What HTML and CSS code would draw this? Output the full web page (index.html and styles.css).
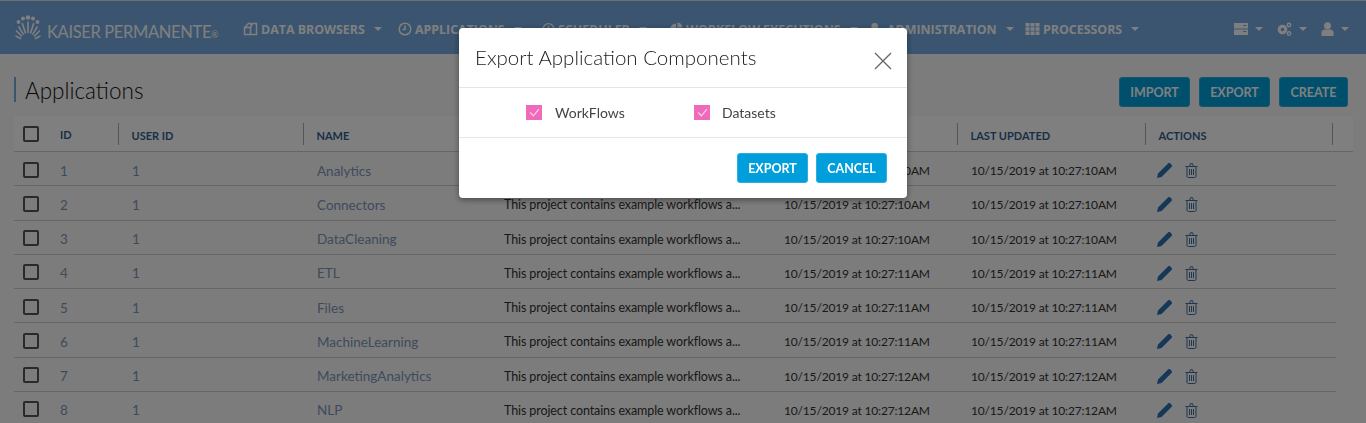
FILE: index.html
```html
<!doctype html>
<html lang="en">
<head>
<meta charset="utf-8">
<title>Applications</title>
<link rel="stylesheet" href="styles.css">
</head>
<body>
<svg class="sprite">
  <symbol id="ic_edit" viewBox="0 0 15 15"><path d="M0 15l1-4.500L10.500 1l3.500 3.500L4.500 14zM11.300.3c.6-.5 1.300-.4 1.800 0l1.600 1.600c.5.500.5 1.200 0 1.800l-.8.800-3.400-3.400z"/></symbol>
  <symbol id="ic_trash" viewBox="0 0 13 15"><path d="M.5 3.500h12M2 3.500V13c0 1 .5 1.500 1.500 1.500h6c1 0 1.500-.5 1.500-1.500V3.500M4.500 3.500l1-2.800h2l1 2.800M4.500 6v6M6.500 6v6M8.500 6v6"/></symbol>
</svg>

<header class="topbar">
  <div class="logo">
    <svg class="logo_mark" width="26" height="25" viewBox="0 0 26 25">
      <circle cx="3.500" cy="7" r="1.900"/><circle cx="8" cy="3.500" r="2"/><circle cx="13" cy="2.500" r="2.300"/><circle cx="18" cy="3.500" r="2"/><circle cx="22.500" cy="7" r="1.900"/>
      <path class="fan" d="M13 18V6.500M15.400 18.400 18.800 8M17.500 19.600 22.500 11.500M19.100 21.500 25 15.500M19.900 23.800 25.500 21M10.600 18.400 7.200 8M8.500 19.600 3.500 11.500M6.900 21.500 1 15.500M6.100 23.800.5 21"/>
    </svg>
    <span class="logo_text">KAISER PERMANENTE<small>&reg;</small></span>
  </div>
  <nav class="nav">
    <a class="nav_item nav_data">
      <svg width="15" height="14" viewBox="0 0 14 14" class="line"><path d="M1 5.500 5 1.500h2.500v4H1v7h6v-7M7.500 3.500 9.500 1.500H13v11H7"/></svg>
      DATA BROWSERS <i class="caret"></i></a>
    <a class="nav_item nav_apps">
      <svg width="14" height="14" viewBox="0 0 14 14" class="line"><circle cx="7" cy="7" r="5.800"/><path d="M7 3.500V7.500H4.500"/></svg>
      APPLICATIONS <i class="caret"></i></a>
    <a class="nav_item nav_sched">
      <svg width="13" height="14" viewBox="0 0 14 14" class="line"><circle cx="7" cy="7" r="5.800"/><path d="M7 3.500V7.500H10"/></svg>
      SCHEDULER <i class="caret"></i></a>
    <a class="nav_item nav_flow">
      <svg width="13" height="14" viewBox="0 0 14 14"><path d="M6.500 1a6.500 6.500 0 1 0 6.500 6.500H6.500z"/><path d="M8 0v5.500h5.500A6 6 0 0 0 8 0z"/></svg>
      WORKFLOW EXECUTIONS <i class="caret"></i></a>
    <a class="nav_item nav_admin">
      <svg width="14" height="14" viewBox="0 0 15 14"><circle cx="5" cy="4" r="3.500"/><path d="M0 13c0-4 2-5 5-5s5 1 5 5z"/><circle cx="11" cy="10" r="3" class="cut"/></svg>
      ADMINISTRATION <i class="caret"></i></a>
    <a class="nav_item">
      <svg width="15" height="12" viewBox="0 0 14 12"><path d="M0 0h4v3.400H0zM5 0h4v3.400H5zM10 0h4v3.400h-4zM0 4.300h4v3.400H0zM5 4.300h4v3.400H5zM10 4.300h4v3.400h-4zM0 8.600h4V12H0zM5 8.600h4V12H5zM10 8.600h4V12h-4z"/></svg>
      PROCESSORS <i class="caret"></i></a>
  </nav>
  <div class="nav_right">
    <a class="nav_icon">
      <svg width="14" height="12" viewBox="0 0 14 12"><path d="M0 0h14v5.500H0zM0 6.500h14V12H0z"/><path class="cut" d="M9 8.500h3.500M9 2.500h3.500"/></svg><i class="caret"></i></a>
    <a class="nav_icon">
      <svg width="15" height="14" viewBox="0 0 15 14"><circle cx="5.500" cy="7.500" r="3.300" class="gear"/><circle cx="12" cy="3" r="1.700" class="gear_small"/><circle cx="12" cy="11.500" r="1.700" class="gear_small"/></svg><i class="caret"></i></a>
    <a class="nav_icon">
      <svg width="13" height="14" viewBox="0 0 13 14"><circle cx="6.500" cy="3.700" r="3.500"/><path d="M.5 14v-3.500C.5 9 2 7.500 4 7.500h5c2 0 3.500 1.500 3.500 3V14z"/></svg><i class="caret"></i></a>
  </div>
</header>

<main class="content">
  <div class="title_bar">
    <h1 class="page_title">Applications</h1>
    <div class="title_btns">
      <button class="btn btn_w71">IMPORT</button>
      <button class="btn btn_w71">EXPORT</button>
      <button class="btn btn_w69">CREATE</button>
    </div>
  </div>

  <div class="grid_head">
    <div class="cell_check"><span class="check"></span></div>
    <div class="col_id">ID</div>
    <div class="col">USER ID</div>
    <div class="col">NAME</div>
    <div class="col">DESCRIPTION</div>
    <div class="col">CREATED</div>
    <div class="col">LAST UPDATED</div>
    <div class="col col_end">ACTIONS</div>
  </div>

  <div class="grid_row"><div class="cell_check"><span class="check"></span></div><div class="cell_id link">1</div><div class="cell link">1</div><div class="cell link">Analytics</div><div class="cell desc">This project contains example workflows a...</div><div class="cell date">10/15/2019 at 10:27:10AM</div><div class="cell date">10/15/2019 at 10:27:10AM</div><div class="actions"><svg class="ic_edit" width="15" height="15"><use href="#ic_edit"/></svg><svg class="ic_trash" width="13" height="15"><use href="#ic_trash"/></svg></div></div>
  <div class="grid_row"><div class="cell_check"><span class="check"></span></div><div class="cell_id link">2</div><div class="cell link">1</div><div class="cell link">Connectors</div><div class="cell desc">This project contains example workflows a...</div><div class="cell date">10/15/2019 at 10:27:10AM</div><div class="cell date">10/15/2019 at 10:27:10AM</div><div class="actions"><svg class="ic_edit" width="15" height="15"><use href="#ic_edit"/></svg><svg class="ic_trash" width="13" height="15"><use href="#ic_trash"/></svg></div></div>
  <div class="grid_row"><div class="cell_check"><span class="check"></span></div><div class="cell_id link">3</div><div class="cell link">1</div><div class="cell link">DataCleaning</div><div class="cell desc">This project contains example workflows a...</div><div class="cell date">10/15/2019 at 10:27:10AM</div><div class="cell date">10/15/2019 at 10:27:10AM</div><div class="actions"><svg class="ic_edit" width="15" height="15"><use href="#ic_edit"/></svg><svg class="ic_trash" width="13" height="15"><use href="#ic_trash"/></svg></div></div>
  <div class="grid_row"><div class="cell_check"><span class="check"></span></div><div class="cell_id link">4</div><div class="cell link">1</div><div class="cell link">ETL</div><div class="cell desc">This project contains example workflows a...</div><div class="cell date">10/15/2019 at 10:27:11AM</div><div class="cell date">10/15/2019 at 10:27:11AM</div><div class="actions"><svg class="ic_edit" width="15" height="15"><use href="#ic_edit"/></svg><svg class="ic_trash" width="13" height="15"><use href="#ic_trash"/></svg></div></div>
  <div class="grid_row"><div class="cell_check"><span class="check"></span></div><div class="cell_id link">5</div><div class="cell link">1</div><div class="cell link">Files</div><div class="cell desc">This project contains example workflows a...</div><div class="cell date">10/15/2019 at 10:27:11AM</div><div class="cell date">10/15/2019 at 10:27:11AM</div><div class="actions"><svg class="ic_edit" width="15" height="15"><use href="#ic_edit"/></svg><svg class="ic_trash" width="13" height="15"><use href="#ic_trash"/></svg></div></div>
  <div class="grid_row"><div class="cell_check"><span class="check"></span></div><div class="cell_id link">6</div><div class="cell link">1</div><div class="cell link">MachineLearning</div><div class="cell desc">This project contains example workflows a...</div><div class="cell date">10/15/2019 at 10:27:11AM</div><div class="cell date">10/15/2019 at 10:27:11AM</div><div class="actions"><svg class="ic_edit" width="15" height="15"><use href="#ic_edit"/></svg><svg class="ic_trash" width="13" height="15"><use href="#ic_trash"/></svg></div></div>
  <div class="grid_row"><div class="cell_check"><span class="check"></span></div><div class="cell_id link">7</div><div class="cell link">1</div><div class="cell link">MarketingAnalytics</div><div class="cell desc">This project contains example workflows a...</div><div class="cell date">10/15/2019 at 10:27:12AM</div><div class="cell date">10/15/2019 at 10:27:12AM</div><div class="actions"><svg class="ic_edit" width="15" height="15"><use href="#ic_edit"/></svg><svg class="ic_trash" width="13" height="15"><use href="#ic_trash"/></svg></div></div>
  <div class="grid_row"><div class="cell_check"><span class="check"></span></div><div class="cell_id link">8</div><div class="cell link">1</div><div class="cell link">NLP</div><div class="cell desc">This project contains example workflows a...</div><div class="cell date">10/15/2019 at 10:27:12AM</div><div class="cell date">10/15/2019 at 10:27:12AM</div><div class="actions"><svg class="ic_edit" width="15" height="15"><use href="#ic_edit"/></svg><svg class="ic_trash" width="13" height="15"><use href="#ic_trash"/></svg></div></div>
</main>

<div class="overlay">
  <div class="modal">
    <div class="modal_head">
      <h2 class="modal_title">Export Application Components</h2>
      <svg class="modal_close" width="18" height="18" viewBox="0 0 18 18"><path d="M1 1l16 16M17 1L1 17"/></svg>
    </div>
    <div class="modal_body">
      <label class="pick pick_first"><span class="pink_check"><svg width="11" height="9" viewBox="0 0 10 8"><path d="M1 4l3 3 5-6"/></svg></span>WorkFlows</label>
      <label class="pick"><span class="pink_check"><svg width="11" height="9" viewBox="0 0 10 8"><path d="M1 4l3 3 5-6"/></svg></span>Datasets</label>
    </div>
    <div class="modal_foot">
      <button class="btn btn_w71">EXPORT</button>
      <button class="btn btn_w71">CANCEL</button>
    </div>
  </div>
</div>
</body>
</html>
```
FILE: styles.css
```css
* {
  margin: 0;
  padding: 0;
  box-sizing: border-box;
}
html, body {
  height: 423px;
  overflow: hidden;
}
body {
  background-color: #f8f8f8;
  font-family: "Lato", "Liberation Sans", sans-serif;
  font-size: 13.5px;
  color: #333;
}
.sprite {
  display: none;
}

/* top bar */
.topbar {
  height: 54px;
  border-top: 1px solid #ddd;
  background-color: #76aae0;
  display: flex;
  align-items: center;
  color: #fff;
}
.topbar svg {
  fill: #fff;
  flex: none;
}
.topbar svg.line {
  fill: none;
  stroke: #fff;
  stroke-width: 1.5;
}
.topbar svg .cut {
  stroke: #76aae0;
  stroke-width: 1;
}
.topbar svg .gear {
  fill: none;
  stroke: #fff;
  stroke-width: 3;
}
.topbar svg .gear_small {
  fill: none;
  stroke: #fff;
  stroke-width: 1.5;
}
.topbar svg .fan {
  fill: none;
  stroke: #fff;
  stroke-width: 1.6;
}
.logo {
  width: 243px;
  padding-left: 15px;
  display: flex;
  align-items: center;
  gap: 6px;
}
.logo_text {
  font-family: "Lato", sans-serif;
  font-size: 16.5px;
  letter-spacing: -.35px;
  margin-top: 8px;
  white-space: nowrap;
}
.logo_text small {
  font-size: 9px;
}
.nav {
  display: flex;
  flex: 1;
  padding-top: 3px;
}
.nav_item {
  display: flex;
  align-items: center;
  gap: 3px;
  font-family: "Open Sans", sans-serif;
  font-size: 12.4px;
  font-weight: 700;
  white-space: nowrap;
}
.nav_data { width: 155px; }
.nav_apps { width: 144px; }
.nav_sched { width: 128px; }
.nav_flow { width: 200px; }
.nav_admin { width: 155px; }
.caret {
  display: inline-block;
  width: 0;
  height: 0;
  border-left: 4px solid transparent;
  border-right: 4px solid transparent;
  border-top: 4px solid #fff;
  margin-left: 6px;
}
.nav_right {
  display: flex;
  padding: 3px 17px 0 0;
}
.nav_icon {
  display: flex;
  align-items: center;
  margin-left: 14px;
}
.nav_icon .caret {
  margin-left: 7px;
}

/* page */
.content {
  padding-top: 23px;
}
.title_bar {
  display: flex;
  justify-content: space-between;
  align-items: flex-start;
  margin: 0 18px 0 14px;
  height: 39px;
}
.page_title {
  border-left: 2px solid #76aae0;
  height: 25px;
  line-height: 27px;
  padding-left: 9px;
  font-size: 22.5px;
  font-weight: 300;
  color: #111;
}
.title_btns {
  display: flex;
  gap: 9px;
}
.btn {
  height: 30px;
  border: 1px solid #2badde;
  border-radius: 3px;
  background-color: #009fdb;
  color: #fff;
  font-family: "Lato", sans-serif;
  font-size: 12.5px;
  font-weight: 700;
}
.btn_w71 { width: 71px; }
.btn_w69 { width: 69px; }

/* table */
.grid_head, .grid_row {
  display: grid;
  grid-template-columns: 32px 72px 185px 187px 280px 187px 188px 189px;
  margin-left: 14px;
  align-items: center;
}
.grid_head {
  width: 1339px;
  height: 36px;
  background-color: #fff;
  border-bottom: 1px solid #ccc;
  font-size: 11px;
  font-weight: 700;
  color: #2f5f90;
}
.grid_row {
  height: 34.25px;
  width: 1322px;
  border-bottom: 1px solid #ccc;
}
.cell_check {
  padding-left: 9px;
  display: flex;
}
.grid_row .cell_check {
  padding-top: 2px;
}
.check {
  width: 16px;
  height: 16px;
  border: 2px solid #555;
  border-radius: 2px;
}
.col_id, .cell_id {
  padding-left: 14px;
}
.col_id {
  padding-top: 2px;
}
.cell_id {
  padding-top: 4px;
}
.col {
  padding-left: 12.5px;
  border-left: 1px solid #aaa;
  height: 22px;
  line-height: 25px;
}
.col_end {
  border-right: 1px solid #aaa;
  margin-right: 1px;
}
.cell {
  padding: 4px 0 0 14px;
  white-space: nowrap;
}
.desc {
  font-size: 12.5px;
  letter-spacing: -.1px;
}
.date {
  font-size: 12px;
  letter-spacing: -.17px;
}
.link {
  color: #7d97b8;
}
.actions {
  display: flex;
  align-items: center;
  gap: 13px;
  padding: 4px 0 0 12px;
}
.ic_edit {
  fill: #2a6fb0;
}
.ic_trash {
  fill: none;
  stroke: #3f70a0;
  stroke-width: 1;
}

/* dialog */
.overlay {
  position: fixed;
  left: 0;
  top: 0;
  right: 0;
  bottom: 0;
  background-color: rgba(0, 0, 0, .5);
}
.modal {
  width: 448px;
  height: 170px;
  margin: 28px auto 0;
  background-color: #fff;
  border-radius: 4px;
  box-shadow: 0 2px 6px rgba(0, 0, 0, .4);
}
.modal_head {
  height: 60px;
  padding: 0 15px 2px 16px;
  border-bottom: 1px solid #e5e5e5;
  display: flex;
  align-items: center;
  justify-content: space-between;
}
.modal_title {
  font-size: 20.5px;
  font-weight: 300;
  color: #222;
}
.modal_close {
  margin-top: 8px;
  stroke: #666;
  stroke-width: 1.300;
}
.modal_body {
  height: 50px;
  border-bottom: 1px solid #e5e5e5;
  display: flex;
  align-items: center;
  padding-left: 67px;
  font-size: 14px;
  color: #444;
}
.pick {
  display: flex;
  align-items: center;
  gap: 13px;
}
.pick_first {
  width: 168px;
}
.pick + .pick {
  gap: 12px;
}
.pink_check {
  width: 16px;
  height: 15px;
  background-color: #f06abc;
  display: flex;
  align-items: center;
  justify-content: center;
}
.pink_check svg {
  fill: none;
  stroke: #fcd;
  stroke-width: 1.2;
}
.modal_foot {
  display: flex;
  justify-content: flex-end;
  gap: 8px;
  padding: 15px 20px 0 0;
}
```
